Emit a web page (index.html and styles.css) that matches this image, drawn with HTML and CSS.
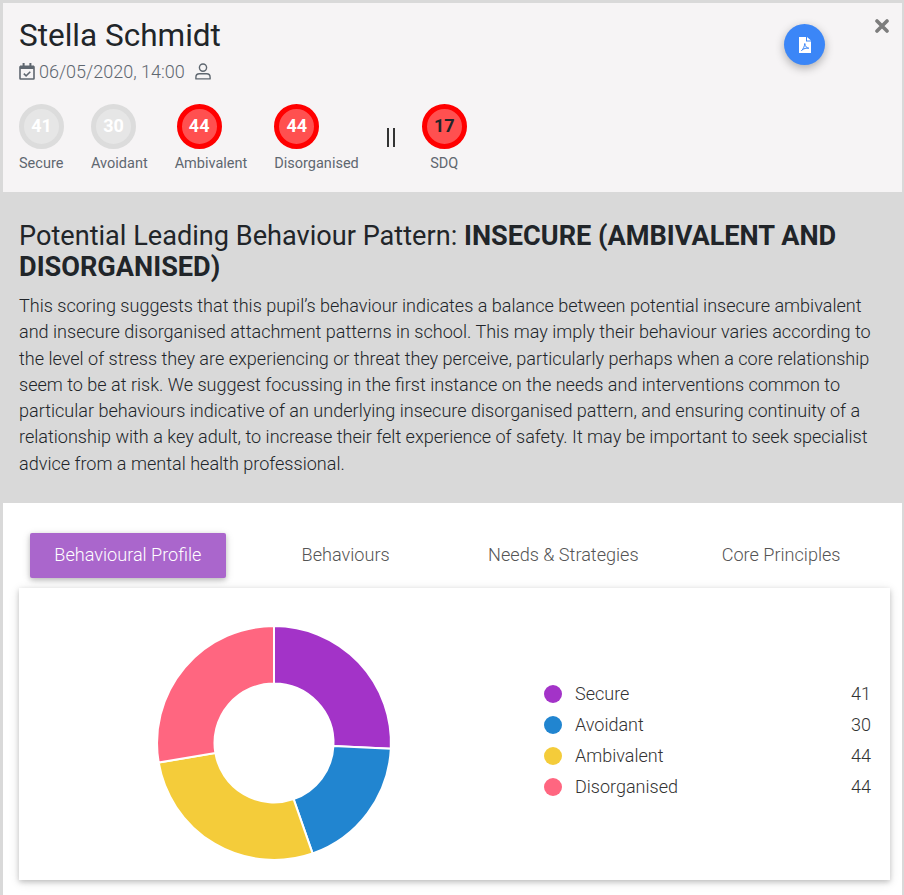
FILE: index.html
```html
<!DOCTYPE html>
<html lang="en">
<head>
  <meta charset="UTF-8">
  <title>Stella Schmidt</title>
  <link rel="stylesheet" href="styles.css">
</head>
<body>

<div class="modal">
  <div class="head">
    <h1>Stella Schmidt</h1>
    <div class="meta">
      <svg class="icon-cal" viewBox="0 0 16 17" width="16" height="17">
        <path d="M1 4h14v11.5a.5.5 0 0 1-.5.5h-13a.5.5 0 0 1-.5-.5z" fill="none" stroke="#5f6770" stroke-width="1.6"/>
        <path d="M1 2.6h14v3.4H1zM3.6 0h2v4h-2zM10.4 0h2v4h-2z" fill="#5f6770"/>
        <path d="M4.8 10.6l2.3 2.3 4.2-4.2" fill="none" stroke="#5f6770" stroke-width="1.5"/>
      </svg>
      <span>06/05/2020, 14:00</span>
      <svg class="icon-user" viewBox="0 0 16 17" width="16" height="17">
        <circle cx="8" cy="4.6" r="3.6" fill="none" stroke="#5f6770" stroke-width="1.4"/>
        <path d="M.9 15.9v-1.6c0-2 1.5-3.5 3.5-3.5h7.2c2 0 3.5 1.500 3.5 3.500v1.600z" fill="none" stroke="#5f6770" stroke-width="1.4" stroke-linejoin="round"/>
      </svg>
    </div>
    <div class="scores">
      <div class="score">
        <div class="ring grey">41</div>
        <span>Secure</span>
      </div>
      <div class="score">
        <div class="ring grey">30</div>
        <span>Avoidant</span>
      </div>
      <div class="score">
        <div class="ring red nudge">44</div>
        <span>Ambivalent</span>
      </div>
      <div class="score">
        <div class="ring red">44</div>
        <span>Disorganised</span>
      </div>
      <div class="sep"></div>
      <div class="score sdq">
        <div class="ring red dark">17</div>
        <span>SDQ</span>
      </div>
    </div>
    <div class="pdf-btn">
      <svg viewBox="0 0 12 16" width="12" height="16">
        <path d="M0 0h7v4.500h5V16H0zM8 0l4 3.500H8z" fill="#fff"/>
        <path d="M2.500 13.500C4 12.500 5.500 9.500 5.800 6.500 6.200 9.500 7.500 10.800 9.800 11.200 7.500 10.800 4.500 11.500 2.500 13.500z" fill="none" stroke="#3b86f7" stroke-width="1"/>
      </svg>
    </div>
    <svg class="close" viewBox="0 0 14 14" width="14" height="14">
      <path d="M2 2l10 10M12 2L2 12" stroke="#7d7d7d" stroke-width="3.600" stroke-linecap="round"/>
    </svg>
  </div>

  <div class="summary">
    <h2>Potential Leading Behaviour Pattern: <b>INSECURE (AMBIVALENT AND DISORGANISED)</b></h2>
    <p>This scoring suggests that this pupil’s behaviour indicates a balance between potential insecure ambivalent and insecure disorganised attachment patterns in school. This may imply their behaviour varies according to the level of stress they are experiencing or threat they perceive, particularly perhaps when a core relationship seem to be at risk. We suggest focussing in the first instance on the needs and interventions common to particular behaviours indicative of an underlying insecure disorganised pattern, and ensuring continuity of a relationship with a key adult, to increase their felt experience of safety. It may be important to seek specialist advice from a mental health professional.</p>
  </div>

  <div class="body">
    <div class="tabs">
      <a class="tab active">Behavioural Profile</a>
      <a class="tab">Behaviours</a>
      <a class="tab">Needs &amp; Strategies</a>
      <a class="tab">Core Principles</a>
    </div>
    <div class="card">
      <svg class="donut" viewBox="0 0 240 240" width="242" height="242">
        <g stroke="#fff" stroke-width="2">
          <path d="M120 4A116 116 0 0 1 235.860 125.730L178.930 122.910A59 59 0 0 0 120 61z" fill="#a333c8"/>
          <path d="M235.860 125.730A116 116 0 0 1 158.240 229.510L139.450 175.700A59 59 0 0 0 178.930 122.910z" fill="#2185d0"/>
          <path d="M158.240 229.510A116 116 0 0 1 5.630 139.380L61.830 129.860A59 59 0 0 0 139.450 175.700z" fill="#f4cc3a"/>
          <path d="M5.630 139.380A116 116 0 0 1 120 4V61A59 59 0 0 0 61.830 129.860z" fill="#ff6680"/>
        </g>
      </svg>
      <ul class="legend">
        <li><i class="dot purple"></i><span>Secure</span><em>41</em></li>
        <li><i class="dot blue"></i><span>Avoidant</span><em>30</em></li>
        <li><i class="dot yellow"></i><span>Ambivalent</span><em>44</em></li>
        <li><i class="dot pink"></i><span>Disorganised</span><em>44</em></li>
      </ul>
    </div>
  </div>
</div>

</body>
</html>
```

FILE: styles.css
```css
* {
  box-sizing: border-box;
}

body {
  margin: 0;
  background: #fff;
  font-family: Roboto, "Liberation Sans", sans-serif;
  color: #212529;
}

.modal {
  width: 904px;
  height: 895px;
  border: 3px solid #d9d9d9;
  border-right-width: 2px;
  border-bottom: none;
  overflow: hidden;
}

/* header */
.head {
  position: relative;
  height: 189px;
  padding: 14px 16px 0;
  background: #f6f4f5;
}

h1 {
  margin: 0;
  font-size: 31.5px;
  line-height: 38px;
  font-weight: 400;
}

.meta {
  display: flex;
  align-items: center;
  height: 24px;
  margin-top: 4px;
  font-size: 18px;
  font-weight: 300;
  color: #5f6770;
}

.icon-cal {
  margin-right: 4px;
}

.icon-user {
  margin-left: 10px;
}

.scores {
  display: flex;
  gap: 27px;
  margin-top: 21px;
}

.score {
  display: flex;
  flex-direction: column;
  font-size: 14.5px;
  font-weight: 400;
  color: #5f6770;
}

.score span {
  margin-top: 5px;
  line-height: 20px;
}

.sdq {
  width: 45px;
  align-items: center;
}

.ring {
  width: 45px;
  height: 45px;
  padding-bottom: 3px;
  border-radius: 50%;
  border: 5px solid;
  display: flex;
  align-items: center;
  justify-content: center;
  font-size: 18px;
  font-weight: 700;
  color: #fff;
}

.grey {
  background: #e6e6e6;
  border-color: #dcdcdc;
}

.red {
  background: #ff5050;
  border-color: #f00;
}

.nudge {
  margin-left: 2px;
}

.dark {
  color: #212529;
}

.sep {
  width: 8px;
  height: 19px;
  margin: 24px 0 0 1px;
  border-left: 2px solid #333;
  border-right: 2px solid #333;
}

.pdf-btn {
  position: absolute;
  left: 781px;
  top: 21px;
  width: 41px;
  height: 41px;
  border-radius: 50%;
  background: #3b86f7;
  box-shadow: 0 3px 10px rgba(0,0,0,0.3);
  display: flex;
  align-items: center;
  justify-content: center;
}

.close {
  position: absolute;
  left: 872px;
  top: 16px;
}

/* summary band */
.summary {
  height: 311px;
  padding: 29px 16px 0;
  background: #d9d9d9;
}

h2 {
  margin: 0;
  font-size: 27.13px;
  line-height: 31px;
  font-weight: 400;
}

h2 b {
  font-weight: 700;
}

.summary p {
  margin: 10px 0 0;
  font-size: 18.06px;
  line-height: 26.3px;
  font-weight: 300;
}

/* tabs and chart */
.body {
  padding: 30px 11px 0 16px;
}

.tabs {
  display: grid;
  grid-template-columns: repeat(4, 1fr);
  width: 871px;
  margin-bottom: 10px;
}

.tab {
  height: 45px;
  margin: 0 11px;
  padding-bottom: 3px;
  display: flex;
  align-items: center;
  justify-content: center;
  font-size: 18.1px;
  font-weight: 300;
  color: #555;
  border-radius: 2px;
}

.active {
  background: #aa66cc;
  color: #fff;
  box-shadow: 0 2px 5px rgba(0,0,0,0.2), 0 2px 10px rgba(0,0,0,0.12);
}

.card {
  width: 871px;
  height: 292px;
  padding: 34px 19px 0 133.5px;
  display: flex;
  align-items: flex-start;
  background: #fff;
  box-shadow: 0 2px 5px rgba(0,0,0,0.18), 0 2px 10px rgba(0,0,0,0.12);
}

.legend {
  list-style: none;
  margin: 56px 0 0 149.5px;
  padding: 0;
  flex: 1;
  font-size: 18px;
  font-weight: 300;
  color: #333;
}

.legend li {
  display: flex;
  align-items: center;
  height: 31px;
}

.legend span {
  flex: 1;
}

.legend em {
  font-style: normal;
}

.dot {
  width: 18px;
  height: 18px;
  margin-right: 13px;
  border-radius: 50%;
}

.purple { background: #a333c8; }
.blue { background: #2185d0; }
.yellow { background: #f4cc3a; }
.pink { background: #ff6680; }
```
